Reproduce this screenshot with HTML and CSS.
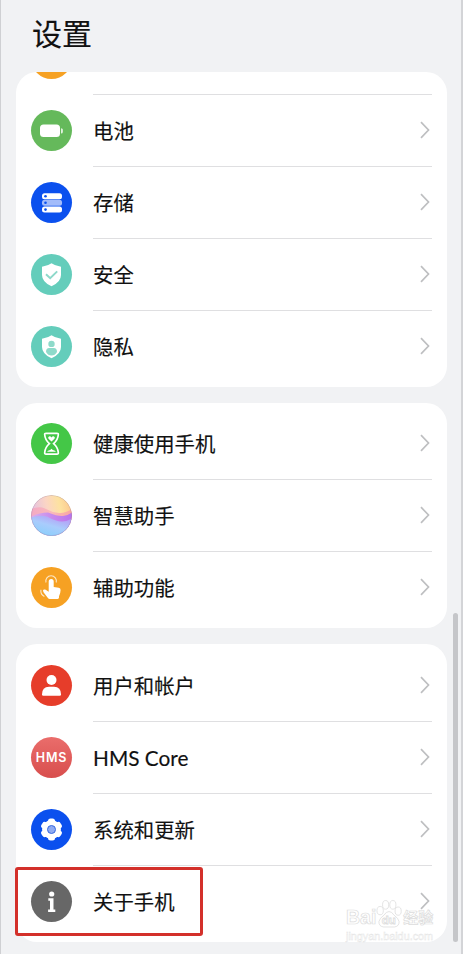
FILE: index.html
```html
<!DOCTYPE html>
<html lang="zh-CN">
<head>
    <meta charset="UTF-8">
    <meta name="viewport" content="width=device-width, initial-scale=1.0">
    <title>设置</title>
    <link rel="stylesheet" href="styles.css">
</head>
<body>

    <div class="phone">
        <h1 class="title">设置</h1>

        <div class="card first">
            <div class="cutRow">
                <div class="icon orange"></div>
            </div>
            <div class="row">
                <svg class="icon green" viewBox="0 0 41 41">
                    <rect x="9" y="14.5" width="20" height="12.5" rx="3.5" fill="#fff"/>
                    <path d="M30.2 18.2q1.5 0 1.5 1.5v2.2q0 1.5-1.5 1.5z" fill="#fff"/>
                </svg>
                <div class="content line"><span>电池</span><svg class="arrow" viewBox="0 0 10 18"><path d="M1 1.2 8.5 9 1 16.8"/></svg></div>
            </div>
            <div class="row">
                <svg class="icon blue" viewBox="0 0 41 41">
                    <rect x="11" y="11.2" width="20" height="6" rx="2.5" fill="#fff"/>
                    <rect x="11" y="17.8" width="20" height="6" rx="2.5" fill="#a3bcfa"/>
                    <rect x="11" y="24.6" width="20" height="6" rx="2.5" fill="#fff"/>
                    <circle cx="14.5" cy="14.2" r="1.3" fill="#0b50ee"/>
                    <circle cx="14.5" cy="20.8" r="1.3" fill="#0b50ee"/>
                    <circle cx="14.5" cy="27.6" r="1.3" fill="#0b50ee"/>
                </svg>
                <div class="content line"><span>存储</span><svg class="arrow" viewBox="0 0 10 18"><path d="M1 1.2 8.5 9 1 16.8"/></svg></div>
            </div>
            <div class="row">
                <svg class="icon teal" viewBox="0 0 41 41">
                    <path d="M20.5 9.3Q24 12 30 12.7V21q0 7-9.5 11.3Q11 28 11 21v-8.3Q17 12 20.5 9.3z" fill="#fff"/>
                    <path d="M15 20.2l4.2 4 7-6.8" fill="none" stroke="#8ed9ca" stroke-width="2"/>
                </svg>
                <div class="content line"><span>安全</span><svg class="arrow" viewBox="0 0 10 18"><path d="M1 1.2 8.5 9 1 16.8"/></svg></div>
            </div>
            <div class="row">
                <svg class="icon teal" viewBox="0 0 41 41">
                    <path d="M20.5 9.3Q24 12 30 12.7V21q0 7-9.5 11.3Q11 28 11 21v-8.3Q17 12 20.5 9.3z" fill="#fff"/>
                    <circle cx="20.5" cy="17.9" r="3.2" fill="#8edaca"/>
                    <path d="M15 26q0-4 3.2-4h4.6q3.2 0 3.2 4-2 3.6-5.5 3.6T15 26z" fill="#8edaca"/>
                </svg>
                <div class="content line"><span>隐私</span><svg class="arrow" viewBox="0 0 10 18"><path d="M1 1.2 8.5 9 1 16.8"/></svg></div>
            </div>
        </div>

        <div class="card second">
            <div class="row">
                <svg class="icon lime" viewBox="0 0 41 41">
                    <path d="M15 10.3h11q1.5 0 1.3 1.5-.4 5.2-4.7 8.9 4.3 3.7 4.7 8.9.2 1.6-1.3 1.6H15q-1.5 0-1.3-1.6.4-5.2 4.7-8.9-4.3-3.7-4.7-8.9-.2-1.5 1.3-1.5z" fill="none" stroke="#fff" stroke-width="1.7"/>
                    <path d="M20.5 18.4l-3-2.7q-1-1.6.5-2.3 1.5-.4 2.5 1 1-1.4 2.5-1 1.5.7.5 2.3z" fill="#fff"/>
                    <path d="M16 28.7q1.5-1.3 3.2-1.7l1.3-1.3 1.3 1.3q1.7.4 3.2 1.7z" fill="#fff"/>
                </svg>
                <div class="content"><span>健康使用手机</span><svg class="arrow" viewBox="0 0 10 18"><path d="M1 1.2 8.5 9 1 16.8"/></svg></div>
            </div>
            <div class="row">
                <svg class="icon" viewBox="0 0 41 41">
                    <defs>
                        <linearGradient id="sky" x1="0" y1="0.4" x2="1" y2="0.2">
                            <stop offset="0" stop-color="#e2bfe2"/>
                            <stop offset="0.4" stop-color="#fbd5c4"/>
                            <stop offset="0.7" stop-color="#fde2a0"/>
                            <stop offset="1" stop-color="#fcc58c"/>
                        </linearGradient>
                        <linearGradient id="wave" x1="0" y1="0" x2="1" y2="0">
                            <stop offset="0" stop-color="#f3a9c4"/>
                            <stop offset="0.5" stop-color="#fab9ba"/>
                            <stop offset="1" stop-color="#f9a6a0"/>
                        </linearGradient>
                        <linearGradient id="deep" x1="0" y1="0" x2="1" y2="0">
                            <stop offset="0" stop-color="#d8b0ee"/>
                            <stop offset="0.5" stop-color="#c88aec"/>
                            <stop offset="1" stop-color="#b873ec"/>
                        </linearGradient>
                        <linearGradient id="sea" x1="0.2" y1="1" x2="0.8" y2="0">
                            <stop offset="0" stop-color="#86cffb"/>
                            <stop offset="0.5" stop-color="#a9ccfc"/>
                            <stop offset="1" stop-color="#b894f4"/>
                        </linearGradient>
                        <clipPath id="ball"><circle cx="20.5" cy="20.5" r="20.5"/></clipPath>
                    </defs>
                    <g clip-path="url(#ball)">
                        <path d="M0 0h41v41H0z" fill="url(#sky)"/>
                        <path d="M0 14q8-3 14-.5 7 4 14 4.500 6 .5 13-4V41H0z" fill="url(#wave)"/>
                        <path d="M0 21.500q9-4 17-4 10 4 15 3.500 5-.5 9-3.500V41H0z" fill="url(#deep)"/>
                        <path d="M0 22.500q9-3 16-1 9 5 15 5 6-.5 10-3V41H0z" fill="url(#sea)"/>
                    </g>
                    <circle cx="20.5" cy="20.5" r="20.1" fill="none" stroke="#94809c" stroke-opacity=".4" stroke-width=".8"/>
                </svg>
                <div class="content line"><span>智慧助手</span><svg class="arrow" viewBox="0 0 10 18"><path d="M1 1.2 8.5 9 1 16.8"/></svg></div>
            </div>
            <div class="row">
                <svg class="icon orange" viewBox="0 0 41 41">
                    <path d="M17.700 14.500q0-2.500 2.500-2.500t2.500 2.500V20l5 .7q2 .3 1.900 2.200-.1 3.500-1.600 6.300v1.400q0 1.400-1.400 1.400h-8q-1 0-1.500-.8l-4.600-6q-1.200-1.800.3-2.600 1.500-.7 3 .8l1.900 1.400z" fill="#fff"/>
                    <path d="M15 15.500a5.300 5.300 0 1 1 10.200 0M9.900 22.800q-.6 4.800 3.500 6.600" fill="none" stroke="#fff" stroke-opacity=".75" stroke-width="1.100"/>
                </svg>
                <div class="content line"><span>辅助功能</span><svg class="arrow" viewBox="0 0 10 18"><path d="M1 1.2 8.5 9 1 16.8"/></svg></div>
            </div>
        </div>

        <div class="card third">
            <div class="row">
                <svg class="icon red" viewBox="0 0 41 41">
                    <circle cx="20.500" cy="15" r="5" fill="#fff"/>
                    <path d="M11 29.500q0-7.700 7-7.700h5q7 0 7 7.700 0 1.300-1.300 1.300H12.300Q11 30.800 11 29.500z" fill="#fff"/>
                </svg>
                <div class="content"><span>用户和帐户</span><svg class="arrow" viewBox="0 0 10 18"><path d="M1 1.2 8.5 9 1 16.8"/></svg></div>
            </div>
            <div class="row">
                <div class="icon hms">HMS</div>
                <div class="content line"><span class="latin">HMS Core</span><svg class="arrow" viewBox="0 0 10 18"><path d="M1 1.2 8.5 9 1 16.8"/></svg></div>
            </div>
            <div class="row">
                <svg class="icon blue" viewBox="0 0 41 41">
                    <g fill="#fff">
                        <circle cx="20.500" cy="20.500" r="9.400"/>
                        <rect x="17" y="9.500" width="7" height="22" rx="2.500"/>
                        <rect x="17" y="9.500" width="7" height="22" rx="2.500" transform="rotate(60 20.500 20.500)"/>
                        <rect x="17" y="9.500" width="7" height="22" rx="2.500" transform="rotate(120 20.500 20.500)"/>
                    </g>
                    <circle cx="20.500" cy="20.500" r="4" fill="#8fabf2" stroke="#3768df" stroke-width="1"/>
                </svg>
                <div class="content line"><span>系统和更新</span><svg class="arrow" viewBox="0 0 10 18"><path d="M1 1.2 8.5 9 1 16.8"/></svg></div>
            </div>
            <div class="row">
                <svg class="icon gray" viewBox="0 0 41 41">
                    <circle cx="20.700" cy="13" r="2.600" fill="#fff"/>
                    <path d="M17.300 17.300h5.200v11.300h1.800v2.400h-7.200v-2.400h1.900v-8.900h-1.700z" fill="#fff"/>
                </svg>
                <div class="content line"><span>关于手机</span><svg class="arrow" viewBox="0 0 10 18"><path d="M1 1.2 8.5 9 1 16.8"/></svg></div>
                <div class="redBox"></div>
                <div class="watermark">
                    <div class="brand">
                        <span>Bai</span>
                        <svg class="paw" viewBox="0 0 27 30">
                            <ellipse cx="4.300" cy="11.500" rx="3.300" ry="4.300"/>
                            <ellipse cx="10" cy="5.500" rx="3.200" ry="4.500"/>
                            <ellipse cx="17.500" cy="5.500" rx="3.200" ry="4.500"/>
                            <ellipse cx="23" cy="12" rx="3.200" ry="4.300"/>
                            <path d="M13.500 12.500q3 0 5 3.500 5 3.500 5.500 7 0 5-5 5.500H8q-5-.5-5-5.500.5-3.500 5.500-7 2-3.500 5-3.500z"/>
                            <text x="6" y="25.500">du</text>
                        </svg>
                        <span class="jingyan">经验</span>
                    </div>
                    <div class="site">jingyan.baidu.com</div>
                </div>
            </div>
        </div>

        <div class="scrollbar"></div>
    </div>

</body>
</html>
```
FILE: styles.css
```css
* {
    box-sizing: border-box;
}
body {
    margin: 0;
    background-color: #f1f2f4;
    font-family: "Noto Sans CJK SC", sans-serif;
    color: #111;
}
.phone {
    position: relative;
    width: 463px;
    height: 954px;
    padding: 0 14px 0 15px;
    border-left: 1px solid #cfd0d3;
    border-right: 2px solid #d3d4d7;
    overflow: hidden;
}
.title {
    margin: 0;
    height: 72px;
    padding: 12px 0 0 16px;
    font-size: 30px;
    line-height: 40px;
    font-weight: 400;
    -webkit-text-stroke: 0.15px #111;
}
.card {
    width: 431px;
    background-color: white;
    border-radius: 21px;
    margin-bottom: 16px;
}
.first {
    height: 315px;
    overflow: hidden;
}
.second {
    height: 225px;
    padding-top: 4px;
}
.third {
    height: 298px;
    padding-top: 5px;
}
.cutRow {
    height: 22px;
    padding-left: 15px;
    display: flex;
    align-items: flex-end;
    padding-bottom: 15px;
}
.row {
    position: relative;
    height: 72px;
    padding: 0 15px;
    display: flex;
    align-items: center;
    gap: 21px;
}
.icon {
    width: 41px;
    height: 41px;
    border-radius: 50%;
    flex-shrink: 0;
}
.content {
    flex: 1;
    height: 72px;
    display: flex;
    justify-content: space-between;
    align-items: center;
    border-top: 1px solid transparent;
    padding-bottom: 2px;
    font-size: 20.4px;
    -webkit-text-stroke: 0.15px #111;
}
.line {
    border-top-color: #dfdfe1;
}
.arrow {
    width: 10px;
    height: 18px;
    margin-right: 2px;
    fill: none;
    stroke: #bebfc1;
    stroke-width: 1.7;
}
.latin {
    font-family: Lato, sans-serif;
    font-size: 20.8px;
    padding-top: 2px;
}
.orange {
    background-color: #f6a123;
}
.green {
    background-color: #65b95b;
}
.blue {
    background-color: #0b50ee;
}
.teal {
    background-color: #64cdbb;
}
.lime {
    background-color: #44c747;
}
.red {
    background-color: #e63d2a;
}
.gray {
    background-color: #676767;
}
.hms {
    display: flex;
    justify-content: center;
    align-items: center;
    background: linear-gradient(#ea6d6b, #d84e4d);
    color: white;
    font-family: Inter, sans-serif;
    font-size: 12.5px;
    font-weight: 600;
    letter-spacing: 0.8px;
}
.redBox {
    position: absolute;
    left: -1px;
    top: 2px;
    width: 188px;
    height: 69px;
    border: 3px solid #d3302a;
    border-radius: 3px;
}
.watermark {
    position: absolute;
    left: 330px;
    top: 34px;
    width: 92px;
    color: white;
    font-family: "Liberation Sans", sans-serif;
}
.brand {
    display: flex;
    align-items: flex-end;
    height: 30px;
    font-size: 19.5px;
    line-height: 24px;
    font-weight: bold;
    -webkit-text-stroke: 0.7px #dcdcdc;
}
.brand span {
    flex-shrink: 0;
}
.paw {
    width: 26px;
    height: 30px;
    flex-shrink: 0;
    fill: white;
    stroke: #dcdcdc;
    stroke-width: 0.8;
}
.paw text {
    font-size: 12px;
    -webkit-text-stroke: 0;
}
.brand .jingyan {
    font-family: "Noto Sans CJK SC", sans-serif;
    font-size: 15px;
    margin-left: 1px;
}
.site {
    font-size: 10.8px;
    line-height: 14px;
    -webkit-text-stroke: 0.4px #e3e3e3;
}
.scrollbar {
    position: absolute;
    right: 3px;
    top: 613px;
    width: 5px;
    height: 329px;
    border-radius: 3px;
    background-color: #c5c6c9;
}
```
